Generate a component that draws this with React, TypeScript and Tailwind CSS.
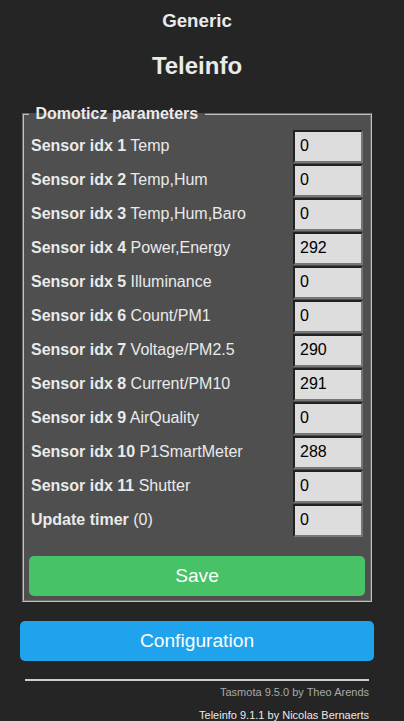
import React from 'react';

const rows: { idx: string; label: string; value: string }[] = [
  { idx: 'Sensor idx 1', label: 'Temp', value: '0' },
  { idx: 'Sensor idx 2', label: 'Temp,Hum', value: '0' },
  { idx: 'Sensor idx 3', label: 'Temp,Hum,Baro', value: '0' },
  { idx: 'Sensor idx 4', label: 'Power,Energy', value: '292' },
  { idx: 'Sensor idx 5', label: 'Illuminance', value: '0' },
  { idx: 'Sensor idx 6', label: 'Count/PM1', value: '0' },
  { idx: 'Sensor idx 7', label: 'Voltage/PM2.5', value: '290' },
  { idx: 'Sensor idx 8', label: 'Current/PM10', value: '291' },
  { idx: 'Sensor idx 9', label: 'AirQuality', value: '0' },
  { idx: 'Sensor idx 10', label: 'P1SmartMeter', value: '288' },
  { idx: 'Sensor idx 11', label: 'Shutter', value: '0' },
  { idx: 'Update timer', label: '(0)', value: '0' },
];

const ParamRow = ({ idx, label, value }: { idx: string; label: string; value: string }) => (
  <div className="flex items-center justify-between h-[34px] px-[2px]">
    <span className="text-[16px] leading-[18px]">
      <b>{idx}</b> {label}
    </span>
    <input
      defaultValue={value}
      className="w-[70px] h-[33px] bg-[#dddddd] text-black border-2 [border-style:inset] border-[#767676] px-[5px] text-[16px] font-['Liberation_Sans',Arial,sans-serif] outline-none"
    />
  </div>
);

export default function App() {
  return (
    <div className="min-h-screen bg-[#252525] text-[#eaeaea] font-['Liberation_Sans',Arial,sans-serif]">
      <div className="ml-[20px] w-[354px] pt-[10px] pb-[20px]">
        <div className="text-center">
          <h3 className="text-[18.72px] leading-[22px] font-bold">Generic</h3>
          <h2 className="mt-[20px] text-[24px] leading-[28px] font-bold">Teleinfo</h2>
        </div>

        <fieldset className="mt-[25px] mx-[2px] border-2 [border-style:groove] border-[#c0c0c0] bg-[#4f4f4f] px-[5px] pt-[6px] pb-[4px]">
          <legend className="px-[2px] text-[16px] leading-[18px] font-bold">
            {'\u00a0'}Domoticz parameters{'\u00a0'}
          </legend>
          <div className="flex flex-col">
            {rows.map((r) => (
              <ParamRow key={r.idx} {...r} />
            ))}
          </div>
          <button className="mt-[19px] w-full h-[40px] rounded-[5px] bg-[#47c266] text-[#faffff] text-[19.2px]">
            Save
          </button>
        </fieldset>

        <button className="mt-[19px] w-full h-[40px] rounded-[5px] bg-[#1fa3ec] text-[#faffff] text-[19.2px]">
          Configuration
        </button>

        <div className="mx-[5px] mt-[18px] text-right text-[11px] leading-[13px]">
          <hr className="border-t-2 border-[#cfcfcf]" />
          <div className="mt-[5px] text-[#aaaaaa]">Tasmota 9.5.0 by Theo Arends</div>
          <div className="mt-[10px] text-[#eaeaea]">Teleinfo 9.1.1 by Nicolas Bernaerts</div>
        </div>
      </div>
    </div>
  );
}
